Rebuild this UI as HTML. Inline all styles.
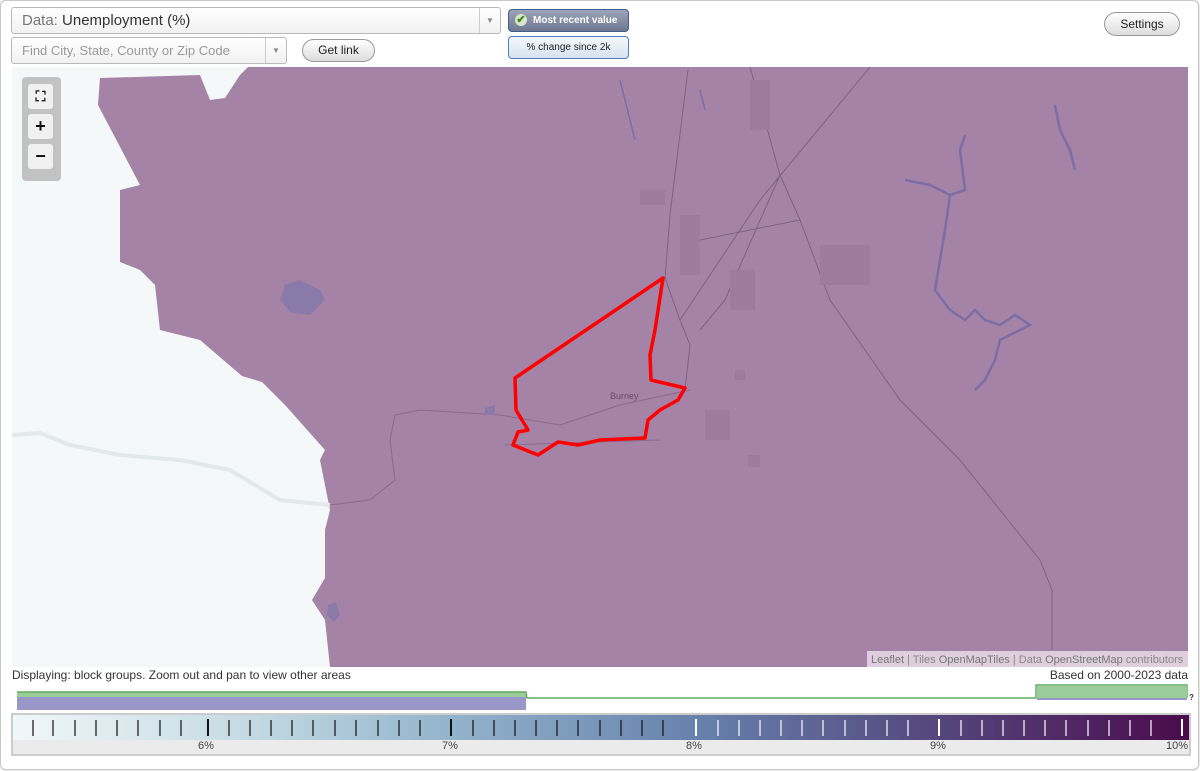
<!DOCTYPE html>
<html><head><meta charset="utf-8"><style>
body{margin:0;width:1200px;height:771px;background:#fff;font-family:"Liberation Sans",sans-serif;position:relative;overflow:hidden}
.frame{position:absolute;left:0;top:0;width:1197px;height:768px;border:1px solid #c8c8c8;border-radius:6px;box-shadow:0 0 2px #bbb}
.ab{position:absolute}
.sel{border:1px solid #b9b9b9;border-radius:3px;background:linear-gradient(#fff,#f1f1f1);box-sizing:border-box}
.btn{border:1px solid #999;border-radius:12px;background:linear-gradient(#fff,#ddd);text-align:center;font-size:12px;color:#222;box-sizing:border-box}
.zc{position:absolute;left:22px;top:77px;width:39px;height:104px;background:#c2c2c2;border-radius:4px}
.zb{position:absolute;left:6px;width:25px;height:25px;background:#f1f1f1;border-radius:3px;text-align:center;font-weight:bold;font-size:18px;line-height:24px;color:#111}
</style></head><body>
<div class="frame"></div>
<div class="ab sel" style="left:11px;top:7px;width:490px;height:27px;font-size:15px;line-height:25px;padding-left:10px;color:#333"><span style="color:#777">Data:</span> Unemployment (%)<span style="position:absolute;right:0;top:0;width:20px;height:25px;border-left:1px solid #ccc;font-size:8px;color:#888;text-align:center">▼</span></div>
<div class="ab sel" style="left:11px;top:37px;width:276px;height:27px;font-size:13px;line-height:25px;padding-left:10px;color:#999">Find City, State, County or Zip Code<span style="position:absolute;right:0;top:0;width:20px;height:25px;border-left:1px solid #ccc;font-size:8px;color:#888;text-align:center">▼</span></div>
<div class="ab btn" style="left:302px;top:39px;width:73px;height:23px;line-height:21px">Get link</div>
<div class="ab" style="left:508px;top:9px;width:121px;height:23px;border:1px solid #3f5f8f;border-radius:4px;background:linear-gradient(#9ba4b8,#6f7891);box-sizing:border-box;color:#fff;font-size:10px;font-weight:bold;line-height:21px;padding-left:24px"><span style="position:absolute;left:6px;top:4px;width:12px;height:12px;border-radius:50%;background:#d8e6c8;color:#3a8a20;font-size:11px;line-height:12px;text-align:center">✔</span>Most recent value</div>
<div class="ab" style="left:508px;top:36px;width:121px;height:23px;border:1px solid #4f7fbf;border-radius:4px;background:linear-gradient(#f4f8fc,#d6e2f0);box-sizing:border-box;color:#222;font-size:10px;line-height:21px;text-align:center">% change since 2k</div>
<div class="ab btn" style="left:1104px;top:12px;width:76px;height:24px;line-height:22px">Settings</div>

<svg class="ab" style="left:12px;top:67px" width="1176" height="600" viewBox="12 67 1176 600">
<rect x="12" y="67" width="1176" height="600" fill="#f4f8f9"/>
<path d="M100,78 L200,75 L210,100 L225,98 L240,75 L248,67 L1188,67 L1188,667 L330,667 L325,620 L312,600 L325,578 L325,530 L330,510 L320,460 L325,450 L285,405 L262,382 L242,376 L200,340 L160,330 L155,285 L140,270 L120,262 L120,190 L140,185 L98,105 Z" fill="#a583a6"/>
<path d="M12,435 L40,433 L70,445 L120,455 L180,460 L230,470 L280,500 L330,505" stroke="#e3e8ea" stroke-width="4" fill="none"/>
<path d="M390,440 L395,415 L420,410 L500,415 L560,425 L620,405 L690,390 M390,440 L395,480 L370,500 L330,505 M505,445 L660,440" stroke="#8a6a8d" stroke-width="1" fill="none"/>
<path d="M665,278 L670,215 L688,70 M665,278 L680,320 L690,345 L685,390 M680,320 L760,200 L870,67 M700,330 L725,300 L780,175 M780,175 L750,67 M780,175 L800,220 L830,300 L900,400 L960,460 L1000,510 L1040,560 L1052,590 L1052,650 M700,240 L800,220" stroke="#7c6284" stroke-width="1" fill="none"/>
<path d="M285,285 L300,280 L320,290 L325,300 L310,315 L290,312 L280,300 Z" fill="#8a7aaa"/>
<path d="M485,408 L495,405 L495,415 L485,415 Z M328,605 L336,602 L340,615 L334,622 L327,615 Z" fill="#8a7aaa"/>
<path d="M905,180 L930,185 L950,195 L965,190 L960,150 L965,135 M950,195 L945,230 L940,260 L935,290 L950,310 L965,320 L975,310 L985,320 L1000,325 L1015,315 L1030,325 L1000,340 L995,360 L985,380 L975,390 M1055,105 L1060,130 L1070,150 L1075,170" stroke="#7a6ea5" stroke-width="2.5" fill="none"/>
<path d="M620,80 L635,140 M700,90 L705,110" stroke="#7a6ea5" stroke-width="1.5" fill="none"/>
<g fill="#9e7a9f"><rect x="680" y="215" width="20" height="60"/><rect x="730" y="270" width="25" height="40"/><rect x="705" y="410" width="25" height="30"/><rect x="748" y="455" width="12" height="12"/><rect x="735" y="370" width="10" height="10"/><rect x="640" y="190" width="25" height="15"/><rect x="820" y="245" width="50" height="40"/><rect x="750" y="80" width="20" height="50"/></g>
<text x="610" y="399" font-size="9" fill="#6a4a6a" font-family="Liberation Sans">Burney</text>
<path d="M663,278 L655,330 L650,355 L651,380 L685,388 L678,400 L660,410 L648,420 L645,438 L600,440 L578,445 L558,442 L538,455 L513,445 L518,432 L528,430 L516,410 L515,378 Z" stroke="#ff0000" stroke-width="3.5" fill="none" stroke-linejoin="round"/>
<rect x="867" y="651" width="321" height="16" fill="#e8dce8" opacity="0.85"/>
<text x="871" y="663" font-size="11" fill="#888" font-family="Liberation Sans"><tspan fill="#777">Leaflet</tspan> | Tiles <tspan fill="#777">OpenMapTiles</tspan> | Data <tspan fill="#777">OpenStreetMap</tspan> contributors</text>
</svg>
<div class="zc"><div class="zb" style="top:7px;font-size:14px">⛶</div><div class="zb" style="top:37px">+</div><div class="zb" style="top:67px">−</div></div>

<div class="ab" style="left:12px;top:668px;font-size:12px;color:#333">Displaying: block groups. Zoom out and pan to view other areas</div>
<div class="ab" style="right:12px;top:668px;font-size:12px;color:#333">Based on 2000-2023 data</div>
<svg class="ab" style="left:0;top:684px" width="1200" height="30">
<path d="M17,8 L526,8 L527,14 L1036,14 L1036,1 L1187,1 L1187,14" stroke="#3e9a3e" stroke-width="1.2" fill="none"/>
<rect x="1037" y="2" width="150" height="12" fill="#99cc99"/>
<rect x="17" y="8.5" width="509" height="5" fill="#99cc99"/>
<rect x="17" y="13" width="509" height="13" fill="#9a97c8"/>
<rect x="1037" y="14" width="150" height="2" fill="#9a97c8"/>
<text x="1189" y="16" font-size="8" font-weight="bold" fill="#333">?</text>
</svg>
<div class="ab" style="left:11px;top:713px;width:1180px;height:43px;border:2px solid #ccc;box-sizing:border-box;background:#ebebeb">
<div style="position:absolute;left:0;top:0;width:1176px;height:25px;background:linear-gradient(90deg,#f1f7f9,#c4dae3 20%,#93b4cc 37%,#6782ad 58%,#55487f 78%,#4a0b4c)"></div>
</div>
<div class="ab" style="left:0;top:740px;width:1200px;font-size:11px;color:#444">
<span class="ab" style="left:198px">6%</span><span class="ab" style="left:442px">7%</span><span class="ab" style="left:686px">8%</span><span class="ab" style="left:930px">9%</span><span class="ab" style="left:1166px">10%</span></div>
<svg class="ab" style="left:0;top:715px" width="1200" height="25">
<g stroke-width="1.2">
<path d="M33,5V21M53,5V21M75,5V21M96,5V21M117,5V21M138,5V21M160,5V21M181,5V21M229,5V21M250,5V21M271,5V21M292,5V21M313,5V21M335,5V21M356,5V21M378,5V21M399,5V21M420,5V21M473,5V21M494,5V21M515,5V21M536,5V21M557,5V21M578,5V21M600,5V21M621,5V21M642,5V21M663,5V21" stroke="#111"/>
<path d="M208,4V21M451,4V21" stroke="#111" stroke-width="2"/>
<path d="M718,5V21M739,5V21M760,5V21M781,5V21M802,5V21M823,5V21M845,5V21M866,5V21M887,5V21M908,5V21M961,5V21M982,5V21M1003,5V21M1024,5V21M1045,5V21M1066,5V21M1088,5V21M1109,5V21M1130,5V21M1151,5V21" stroke="#fff"/>
<path d="M696,4V21M939,4V21M1182,4V21" stroke="#fff" stroke-width="2"/>
</g></svg>
</body></html>
